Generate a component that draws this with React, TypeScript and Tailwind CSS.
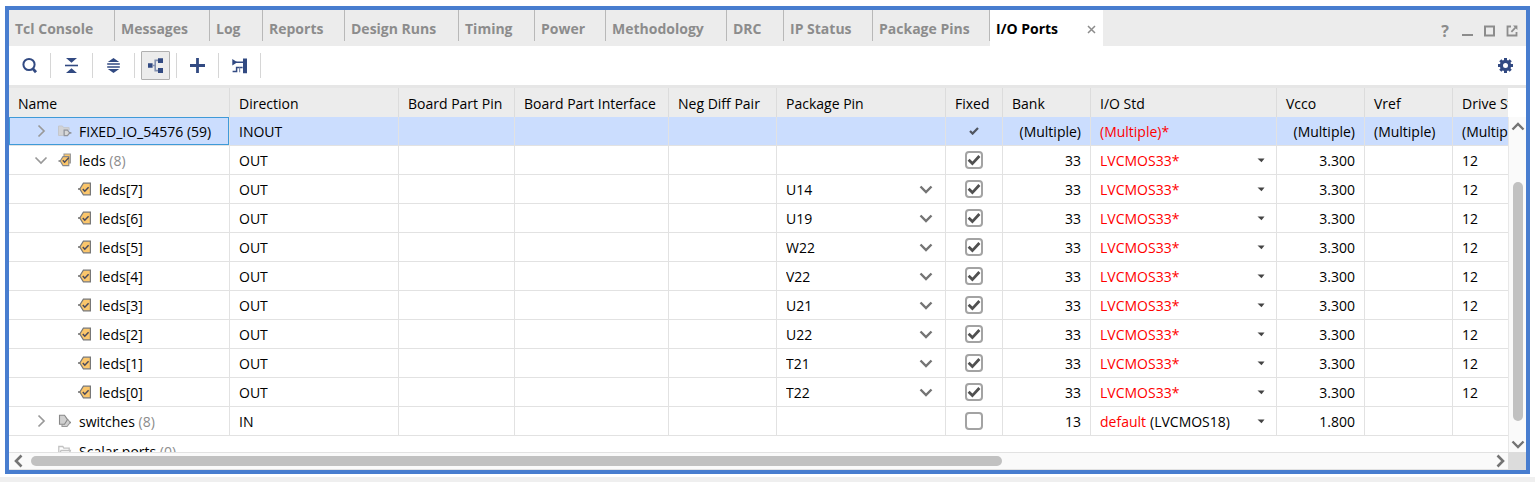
import React from "react";

const INK = "#324a82";

const tabs: { label: string; width: string }[] = [
  { label: "Tcl Console", width: "w-[106px]" },
  { label: "Messages", width: "w-[95px]" },
  { label: "Log", width: "w-[53px]" },
  { label: "Reports", width: "w-[82px]" },
  { label: "Design Runs", width: "w-[114px]" },
  { label: "Timing", width: "w-[76px]" },
  { label: "Power", width: "w-[71px]" },
  { label: "Methodology", width: "w-[121px]" },
  { label: "DRC", width: "w-[57px]" },
  { label: "IP Status", width: "w-[89px]" },
  { label: "Package Pins", width: "w-[117px]" },
];

const columns: { label: string; width: string }[] = [
  { label: "Name", width: "w-[221px]" },
  { label: "Direction", width: "w-[169px]" },
  { label: "Board Part Pin", width: "w-[116px]" },
  { label: "Board Part Interface", width: "w-[154px]" },
  { label: "Neg Diff Pair", width: "w-[108px]" },
  { label: "Package Pin", width: "w-[169px]" },
  { label: "Fixed", width: "w-[57px]" },
  { label: "Bank", width: "w-[88px]" },
  { label: "I/O Std", width: "w-[186px]" },
  { label: "Vcco", width: "w-[88px]" },
  { label: "Vref", width: "w-[88px]" },
  { label: "Drive Strength", width: "" },
];

const leds: { name: string; pin: string }[] = [
  { name: "leds[7]", pin: "U14" },
  { name: "leds[6]", pin: "U19" },
  { name: "leds[5]", pin: "W22" },
  { name: "leds[4]", pin: "V22" },
  { name: "leds[3]", pin: "U21" },
  { name: "leds[2]", pin: "U22" },
  { name: "leds[1]", pin: "T21" },
  { name: "leds[0]", pin: "T22" },
];

/* ---------- toolbar icons ---------- */

function Icon({ children }: { children: React.ReactNode }) {
  return (
    <svg width="17" height="17" viewBox="0 0 17 17" fill="none" aria-hidden="true">
      {children}
    </svg>
  );
}

const SearchIcon = () => (
  <Icon>
    <circle cx="8" cy="7.5" r="5.6" stroke={INK} strokeWidth="2" />
    <path d="M11.8 11.6 15 15.2" stroke={INK} strokeWidth="2.8" />
  </Icon>
);
const CollapseIcon = () => (
  <Icon>
    <path d="M3 1h11L8.5 5.8zM3 16h11L8.5 11.2z" fill={INK} />
    <path d="M2 8.5h13" stroke={INK} strokeWidth="1.6" />
  </Icon>
);
const ExpandIcon = () => (
  <Icon>
    <path d="M2.8 5 8.5 1l5.7 4zM2.8 12l5.7 4 5.7-4z" fill={INK} />
    <path d="M2.2 7h12.6M2.2 10h12.6" stroke={INK} strokeWidth="1.4" />
  </Icon>
);
const TreeIcon = () => (
  <Icon>
    <path d="M1 6.2h4.6v4.6H1zM11 1.3h5V6h-5zM11 11h5v5h-5z" fill={INK} />
    <path d="M5.6 8.5h2.6M11 3.4H8.2v10.2H11" stroke="#8391b0" strokeWidth="1.6" />
  </Icon>
);
const PlusIcon = () => (
  <Icon>
    <path d="M8.5 1v15M1 8.5h15" stroke={INK} strokeWidth="2.8" />
  </Icon>
);
const PortIcon = () => (
  <Icon>
    <path d="M1.3 2 6.4 5.2 1.3 8.6zM12 1.6h4v14.6h-4z" fill={INK} />
    <path d="M5 5.2h7M1.6 14.5h4V10.6h6" stroke={INK} strokeWidth="1.5" />
    <path d="M8.6 10.6v4.6" stroke="#8391b0" strokeWidth="1.2" />
  </Icon>
);
const GearIcon = () => (
  <Icon>
    <circle cx="8.5" cy="8.5" r="4.1" stroke={INK} strokeWidth="3.2" />
    <path
      d="M8.5 1v2.6M8.5 13.4V16M1 8.5h2.6M13.4 8.5H16M3.3 3.3l1.8 1.8M11.9 11.9l1.8 1.8M3.3 13.7l1.8-1.8M11.9 5.1l1.8-1.8"
      stroke={INK}
      strokeWidth="3"
    />
  </Icon>
);

/* ---------- tree icons ---------- */

function Chevron({ dir, color, weight }: { dir: "up" | "down" | "left" | "right"; color: string; weight: number }) {
  const paths = {
    up: "M2.5 10.5 8 5l5.5 5.5",
    down: "M2.5 5.5 8 11l5.5-5.5",
    left: "M10.5 2.5 5 8l5.5 5.5",
    right: "M5.5 2.5 11 8l-5.5 5.5",
  };
  return (
    <svg className="shrink-0" width="16" height="16" viewBox="0 0 16 16" fill="none" aria-hidden="true">
      <path d={paths[dir]} stroke={color} strokeWidth={weight} />
    </svg>
  );
}

function SmallIcon({ children }: { children: React.ReactNode }) {
  return (
    <svg className="shrink-0" width="16" height="16" viewBox="0 0 16 16" fill="none" aria-hidden="true">
      {children}
    </svg>
  );
}

const OutPortIcon = () => (
  <SmallIcon>
    <path d="M1 8h3" stroke="#777" strokeWidth="1.6" />
    <path d="M6.4 2.2h7v11.6h-7L2.8 8z" fill="#fbc66b" stroke="#777" strokeWidth="1.2" />
    <path d="m5.8 8 2 2.2 3.8-4" stroke="#4a4a5c" strokeWidth="1.5" />
  </SmallIcon>
);
const OutBusIcon = () => (
  <SmallIcon>
    <path d="M7 4V2h6.4v9H12" fill="#fbc66b" stroke="#999" strokeWidth="1.1" />
    <path d="M1.5 9h2" stroke="#777" strokeWidth="1.5" />
    <path d="M6 4.6h5.8v9H6L3.2 9z" fill="#fbc66b" stroke="#888" strokeWidth="1.1" />
    <path d="m5.8 8.2 1.8 2L11.8 5.6" stroke="#4a4a5c" strokeWidth="1.4" />
  </SmallIcon>
);
const InBusIcon = () => (
  <SmallIcon>
    <path d="M5 11.5v2h5L13.2 9.6 10.5 6" fill="#d0d0d0" stroke="#999" strokeWidth="1.1" />
    <path d="M2.5 2.2h5l3 4.4-3 4.6h-5z" fill="#d0d0d0" stroke="#888" strokeWidth="1.1" />
    <path d="M12.8 9.5H14" stroke="#888" strokeWidth="1.4" />
  </SmallIcon>
);
const InterfaceIcon = () => (
  <SmallIcon>
    <path d="M1.5 12.5V3h4l1 1.6h5.6V7H6.6v5.5z" fill="#d2d3d6" stroke="#c4c7cd" />
    <path d="M7.2 7.2h3.2l2.3 2.7-2.3 2.7H7.2z" fill="#d8d8d8" stroke="#92959c" strokeWidth="1.2" />
    <path d="M12.4 9.9h2" stroke="#888" strokeWidth="1.4" />
  </SmallIcon>
);
const FolderIcon = () => (
  <SmallIcon>
    <path d="M1.8 13V3.5h4l1 1.7h5.4V7M1.8 13h9.6l2-5.5H4z" stroke="#c2c2c2" strokeWidth="1.3" />
  </SmallIcon>
);

/* ---------- cells ---------- */

function Cell({ children, right, edge }: { children?: React.ReactNode; right?: boolean; edge?: boolean }) {
  return (
    <td
      className={
        "h-[29px] overflow-hidden whitespace-nowrap border-b border-[#e2e2e2] px-[9px] pt-0.5 pb-0 " +
        (right ? "text-right " : "") +
        (edge ? "" : "border-r")
      }
    >
      {children}
    </td>
  );
}

function CheckCell({ checked, label }: { checked: boolean; label: string }) {
  return (
    <td className="h-[29px] border-r border-b border-[#e2e2e2] p-0">
      <label className="relative mx-auto block size-[18px]">
        <input
          type="checkbox"
          aria-label={label}
          defaultChecked={checked}
          className="peer block size-[18px] appearance-none rounded-sm border-2 border-[#a3a3a3] bg-white"
        />
        <svg
          className="pointer-events-none absolute inset-0 hidden peer-checked:block"
          width="18"
          height="18"
          viewBox="0 0 18 18"
          fill="none"
          aria-hidden="true"
        >
          <path d="m3.6 8.8 3.8 3.8 7-7.6" stroke="#505050" strokeWidth="2.8" />
        </svg>
      </label>
    </td>
  );
}

function PinCell({ pin, name }: { pin: string; name: string }) {
  return (
    <td className="h-[29px] border-r border-b border-[#e2e2e2] p-0">
      <div className="relative flex items-center">
        <select
          aria-label={"Package pin of " + name}
          defaultValue={pin}
          className="h-[22px] w-full appearance-none bg-transparent px-[9px] pt-0.5 leading-5 outline-none"
        >
          <option>{pin}</option>
        </select>
        <span className="pointer-events-none absolute right-[11px]">
          <Chevron dir="down" color="#747474" weight={2.4} />
        </span>
      </div>
    </td>
  );
}

function StdCell({ prefix, value, name }: { prefix?: string; value: string; name: string }) {
  return (
    <td className="h-[29px] border-r border-b border-[#e2e2e2] p-0">
      <div className="relative flex items-center gap-1 pl-[9px]">
        {prefix && <span className="pt-0.5 text-[#ff0000]">{prefix}</span>}
        <select
          aria-label={"I/O standard of " + name}
          defaultValue={value}
          className={
            "h-[22px] min-w-0 flex-1 appearance-none bg-transparent p-0 pt-0.5 leading-5 outline-none " +
            (prefix ? "text-black" : "text-[#ff0000]")
          }
        >
          <option>{value}</option>
        </select>
        <svg
          className="pointer-events-none absolute right-[11px]"
          width="8"
          height="5"
          viewBox="0 0 8 5"
          aria-hidden="true"
        >
          <path d="M.5.5h7L4.5 4.2z" fill="#444" />
        </svg>
      </div>
    </td>
  );
}

function NameCell({
  toggle,
  icon,
  name,
  count,
  selected,
}: {
  toggle?: "right" | "down";
  icon: React.ReactNode;
  name: string;
  count?: string;
  selected?: boolean;
}) {
  return (
    <td className="h-[29px] border-r border-b border-[#e2e2e2] p-0">
      <div
        className={
          "flex h-7 items-center gap-1.5 border whitespace-nowrap " +
          (selected ? "border-[#3f9ad8] " : "border-transparent ") +
          (toggle ? "pl-[23px]" : "pl-[67px]")
        }
      >
        {toggle && (
          <button type="button" aria-label={"Toggle " + name} className="mr-0.5 block">
            <Chevron dir={toggle} color="#999" weight={1.7} />
          </button>
        )}
        {icon}
        <span className="pt-0.5">
          {name}
          {count && <span className={selected ? "" : "text-[#8c8c8c]"}> {count}</span>}
        </span>
      </div>
    </td>
  );
}

function ToolButton({ label, active, children }: { label: string; active?: boolean; children: React.ReactNode }) {
  return (
    <div className="flex h-[25px] w-[42px] items-center justify-center border-r border-[#d6d6d6]">
      <button
        type="button"
        aria-label={label}
        className={
          "flex size-[29px] shrink-0 items-center justify-center border " +
          (active ? "rounded-[1px] border-[#b0b0b0] bg-[#ececec]" : "border-transparent")
        }
      >
        {children}
      </button>
    </div>
  );
}

export default function App() {
  return (
    <div className="flex h-screen flex-col overflow-hidden bg-white pt-1.5 font-['Open_Sans','Noto_Sans',sans-serif] text-sm text-black">
      <main className="mr-[5px] mb-[3px] ml-[5px] flex min-h-0 flex-1 flex-col border-4 border-[#487dcf]">
        <nav className="flex h-9 shrink-0 bg-[#ececec]" aria-label="Panels">
          {tabs.map((t) => (
            <button
              key={t.label}
              type="button"
              className={
                "flex h-[31px] shrink-0 items-center border-r border-[#b8b8b8] pt-1.5 pl-1.5 text-left font-bold whitespace-nowrap text-[#8c8c8c] " +
                t.width
              }
            >
              {t.label}
            </button>
          ))}
          <div className="flex w-[113px] shrink-0 items-center justify-between bg-white pt-0.5 pr-[7px] pl-1.5">
            <button type="button" className="font-bold whitespace-nowrap">
              I/O Ports
            </button>
            <button type="button" aria-label="Close tab">
              <svg width="9" height="9" viewBox="0 0 9 9" fill="none" aria-hidden="true">
                <path d="m1 1 7 7M8 1 1 8" stroke="#8c8c8c" strokeWidth="1.5" />
              </svg>
            </button>
          </div>
          <div className="mt-[5px] mr-2 ml-auto flex items-center gap-2 self-center text-[#8c8c8c]">
            <button type="button" aria-label="Help" className="w-3.5 text-base leading-4 font-bold">
              ?
            </button>
            <button type="button" aria-label="Minimize">
              <svg width="14" height="14" viewBox="0 0 14 14" aria-hidden="true">
                <path d="M2 10h11v2H2z" fill="#8c8c8c" />
              </svg>
            </button>
            <button type="button" aria-label="Maximize">
              <svg width="14" height="14" viewBox="0 0 14 14" fill="none" aria-hidden="true">
                <path d="M3 2.5h9v9H3z" stroke="#8c8c8c" strokeWidth="2" />
              </svg>
            </button>
            <button type="button" aria-label="Float">
              <svg width="14" height="14" viewBox="0 0 14 14" fill="none" aria-hidden="true">
                <path d="M7 2.5H3.5v9h9V8" stroke="#8c8c8c" strokeWidth="1.8" />
                <path d="M9 1.5h4.4v4.4z" fill="#8c8c8c" />
                <path d="M7.4 7.8 12 3" stroke="#8c8c8c" strokeWidth="1.8" />
              </svg>
            </button>
          </div>
        </nav>

        <div className="flex h-[42px] shrink-0 items-center border-b-[3px] border-[#e6e6e6] bg-white">
          <ToolButton label="Search">
            <SearchIcon />
          </ToolButton>
          <ToolButton label="Collapse all">
            <CollapseIcon />
          </ToolButton>
          <ToolButton label="Expand all">
            <ExpandIcon />
          </ToolButton>
          <ToolButton label="Group by interface and bus" active>
            <TreeIcon />
          </ToolButton>
          <ToolButton label="Create I/O ports">
            <PlusIcon />
          </ToolButton>
          <ToolButton label="Place ports">
            <PortIcon />
          </ToolButton>
          <button type="button" aria-label="Settings" className="mr-3 ml-auto">
            <GearIcon />
          </button>
        </div>

        <div className="flex min-h-0 flex-1">
          <div className="min-w-0 flex-1 overflow-hidden">
            <table className="w-full min-w-[1499px] table-fixed border-separate border-spacing-0">
              <thead>
                <tr className="bg-[#ececec]">
                  {columns.map((c, i) => (
                    <th
                      key={c.label}
                      scope="col"
                      className={
                        "h-[29px] overflow-hidden px-[9px] pt-0.5 pb-0 text-left font-normal whitespace-nowrap " +
                        (i < columns.length - 1 ? "border-r border-[#dcdcdc] " : "") +
                        c.width
                      }
                    >
                      {c.label}
                    </th>
                  ))}
                </tr>
              </thead>
              <tbody>
                <tr className="bg-[#cbddfe]">
                  <NameCell toggle="right" icon={<InterfaceIcon />} name="FIXED_IO_54576" count="(59)" selected />
                  <Cell>INOUT</Cell>
                  <Cell />
                  <Cell />
                  <Cell />
                  <Cell />
                  <td className="h-[29px] border-r border-b border-[#e2e2e2] p-0">
                    <svg className="mx-auto" width="10" height="8" viewBox="0 0 10 8" fill="none" role="img" aria-label="Fixed">
                      <path d="m1 4 2.6 2.6L9 1" stroke="#505560" strokeWidth="2.2" />
                    </svg>
                  </td>
                  <Cell right>(Multiple)</Cell>
                  <Cell>
                    <span className="text-[#ff0000]">(Multiple)*</span>
                  </Cell>
                  <Cell right>(Multiple)</Cell>
                  <Cell>(Multiple)</Cell>
                  <Cell edge>(Multiple)</Cell>
                </tr>
                <tr>
                  <NameCell toggle="down" icon={<OutBusIcon />} name="leds" count="(8)" />
                  <Cell>OUT</Cell>
                  <Cell />
                  <Cell />
                  <Cell />
                  <Cell />
                  <CheckCell checked label="leds fixed" />
                  <Cell right>33</Cell>
                  <StdCell value="LVCMOS33*" name="leds" />
                  <Cell right>3.300</Cell>
                  <Cell />
                  <Cell edge>12</Cell>
                </tr>
                {leds.map((p) => (
                  <tr key={p.name}>
                    <NameCell icon={<OutPortIcon />} name={p.name} />
                    <Cell>OUT</Cell>
                    <Cell />
                    <Cell />
                    <Cell />
                    <PinCell pin={p.pin} name={p.name} />
                    <CheckCell checked label={p.name + " fixed"} />
                    <Cell right>33</Cell>
                    <StdCell value="LVCMOS33*" name={p.name} />
                    <Cell right>3.300</Cell>
                    <Cell />
                    <Cell edge>12</Cell>
                  </tr>
                ))}
                <tr>
                  <NameCell toggle="right" icon={<InBusIcon />} name="switches" count="(8)" />
                  <Cell>IN</Cell>
                  <Cell />
                  <Cell />
                  <Cell />
                  <Cell />
                  <CheckCell checked={false} label="switches fixed" />
                  <Cell right>13</Cell>
                  <StdCell prefix="default" value="(LVCMOS18)" name="switches" />
                  <Cell right>1.800</Cell>
                  <Cell />
                  <Cell edge />
                </tr>
                <tr>
                  <td colSpan={12} className="h-[29px] p-0">
                    <div className="flex h-7 items-center gap-1.5 pl-12 whitespace-nowrap">
                      <FolderIcon />
                      <span className="pt-0.5">
                        Scalar ports <span className="text-[#8c8c8c]">(0)</span>
                      </span>
                    </div>
                  </td>
                </tr>
              </tbody>
            </table>
          </div>
          <div className="flex w-[18px] shrink-0 flex-col pt-[29px]">
            <div className="flex min-h-0 flex-1 flex-col items-center border-l border-[#e8e8e8] bg-[#fafafa]">
              <button type="button" aria-label="Scroll up" className="flex h-5 items-center">
                <Chevron dir="up" color="#747474" weight={2.4} />
              </button>
              <div className="flex min-h-0 w-full flex-1 flex-col items-center justify-end pb-[15px]">
                <div className="h-[84%] w-2.5 rounded-full bg-[#c1c1c1]" />
              </div>
              <button type="button" aria-label="Scroll down" className="flex h-4 items-center">
                <Chevron dir="down" color="#747474" weight={2.4} />
              </button>
            </div>
          </div>
        </div>

        <div className="flex h-[18px] shrink-0">
          <div className="flex min-w-0 flex-1 items-center gap-1 border-y border-[#e2e2e2] bg-[#fafafa]">
            <button type="button" aria-label="Scroll left" className="ml-0.5">
              <Chevron dir="left" color="#747474" weight={2.6} />
            </button>
            <div className="min-w-0 flex-1">
              <div className="h-2.5 w-2/3 rounded-full bg-[#c1c1c1]" />
            </div>
            <button type="button" aria-label="Scroll right">
              <Chevron dir="right" color="#747474" weight={2.6} />
            </button>
          </div>
          <div className="w-[18px] shrink-0 bg-[#dcdcdc]" />
        </div>
      </main>
      <footer className="h-[5px] shrink-0 bg-[#efefef]" />
    </div>
  );
}
